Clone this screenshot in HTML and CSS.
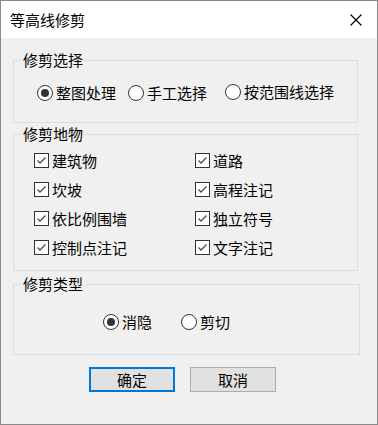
FILE: index.html
```html
<!DOCTYPE html>
<html lang="zh-CN">
<head>
<meta charset="utf-8">
<title>等高线修剪</title>
<link rel="stylesheet" href="styles.css">
</head>
<body>
<div class="window">
  <div class="titlebar">
    <span class="title">等高线修剪</span>
    <svg class="close" width="12" height="12" viewBox="0 0 12 12"><path d="M0.5 0.5 L11.5 11.5 M11.5 0.5 L0.5 11.5" stroke="#000" stroke-width="1.1" fill="none"/></svg>
  </div>
  <div class="content">
    <fieldset class="group g1">
      <legend>修剪选择</legend>
      <div class="inner radios-1">
        <label class="opt"><span class="radio on"></span>整图处理</label>
        <label class="opt"><span class="radio"></span>手工选择</label>
        <label class="opt up"><span class="radio"></span>按范围线选择</label>
      </div>
    </fieldset>
    <fieldset class="group g2">
      <legend>修剪地物</legend>
      <div class="inner checks">
        <label class="opt"><span class="check"><svg width="13" height="13" viewBox="0 0 13 13"><path d="M2.5 6.5 L5 9 L10.5 3.5" stroke="#4a4a4a" stroke-width="1.3" fill="none"/></svg></span>建筑物</label>
        <label class="opt"><span class="check"><svg width="13" height="13" viewBox="0 0 13 13"><path d="M2.5 6.5 L5 9 L10.5 3.5" stroke="#4a4a4a" stroke-width="1.3" fill="none"/></svg></span>道路</label>
        <label class="opt"><span class="check"><svg width="13" height="13" viewBox="0 0 13 13"><path d="M2.5 6.5 L5 9 L10.5 3.5" stroke="#4a4a4a" stroke-width="1.3" fill="none"/></svg></span>坎坡</label>
        <label class="opt"><span class="check"><svg width="13" height="13" viewBox="0 0 13 13"><path d="M2.5 6.5 L5 9 L10.5 3.5" stroke="#4a4a4a" stroke-width="1.3" fill="none"/></svg></span>高程注记</label>
        <label class="opt"><span class="check"><svg width="13" height="13" viewBox="0 0 13 13"><path d="M2.5 6.5 L5 9 L10.5 3.5" stroke="#4a4a4a" stroke-width="1.3" fill="none"/></svg></span>依比例围墙</label>
        <label class="opt"><span class="check"><svg width="13" height="13" viewBox="0 0 13 13"><path d="M2.5 6.5 L5 9 L10.5 3.5" stroke="#4a4a4a" stroke-width="1.3" fill="none"/></svg></span>独立符号</label>
        <label class="opt"><span class="check"><svg width="13" height="13" viewBox="0 0 13 13"><path d="M2.5 6.5 L5 9 L10.5 3.5" stroke="#4a4a4a" stroke-width="1.3" fill="none"/></svg></span>控制点注记</label>
        <label class="opt"><span class="check"><svg width="13" height="13" viewBox="0 0 13 13"><path d="M2.5 6.5 L5 9 L10.5 3.5" stroke="#4a4a4a" stroke-width="1.3" fill="none"/></svg></span>文字注记</label>
      </div>
    </fieldset>
    <fieldset class="group g3">
      <legend>修剪类型</legend>
      <div class="inner radios-3">
        <label class="opt"><span class="radio on"></span>消隐</label>
        <label class="opt"><span class="radio"></span>剪切</label>
      </div>
    </fieldset>
    <div class="buttons">
      <button class="btn default">确定</button>
      <button class="btn">取消</button>
    </div>
  </div>
</div>
</body>
</html>
```

FILE: styles.css
```css
* { box-sizing: border-box; }
html, body { margin: 0; padding: 0; background: #ffffff; }
body {
  font-family: "Noto Sans CJK SC", "Microsoft YaHei", sans-serif;
  font-size: 15px;
  color: #000;
}
.window {
  width: 378px;
  height: 425px;
  border: 1px solid #8a8a8a;
  background: #f0f0f0;
  display: flex;
  flex-direction: column;
}
.titlebar {
  height: 37px;
  flex: none;
  background: #ffffff;
  display: flex;
  align-items: center;
  justify-content: space-between;
  padding: 0 15px 0 9px;
  line-height: 20px;
}
.close { display: block; }
.content {
  padding-left: 12px;
}
.group {
  margin: 0;
  padding: 0;
  border: 1px solid #dcdcdc;
  width: 345px;
  min-width: 0;
}
.group legend {
  margin-left: 7px;
  padding: 0 2px;
  line-height: 20px;
}
.opt {
  display: flex;
  align-items: center;
  gap: 3px;
  line-height: 20px;
  white-space: nowrap;
}
.radio {
  width: 16px;
  height: 16px;
  flex: none;
  border: 1px solid #333;
  border-radius: 50%;
  background: #fff;
  display: flex;
  align-items: center;
  justify-content: center;
}
.radio.on::after {
  content: "";
  width: 8px;
  height: 8px;
  border-radius: 50%;
  background: #333;
}
.check {
  width: 15px;
  height: 15px;
  flex: none;
  border: 1px solid #333;
  background: #fff;
  display: flex;
}
.check svg { display: block; }

.g1 { margin-top: 12px; }
.radios-1 {
  display: grid;
  grid-template-columns: 91px 97px auto;
  padding: 13px 0 19px 23px;
}
.radios-1 .up { margin-top: -2px; }

.g2 { margin-top: 1px; }
.checks {
  display: grid;
  grid-template-columns: 161px auto;
  grid-auto-rows: 29px;
  align-items: center;
  padding: 2px 0 8px 20px;
}

.g3 { margin-top: 3px; width: 347px; }
.radios-3 {
  display: grid;
  grid-template-columns: 78px auto;
  padding: 18px 0 22px 89px;
}

.buttons {
  display: flex;
  gap: 15px;
  margin-top: 12px;
  padding-left: 76px;
}
.btn {
  width: 86px;
  height: 25px;
  background: #e1e1e1;
  border: 1px solid #adadad;
  font-family: inherit;
  font-size: 15px;
  color: #000;
  padding: 0;
  display: flex;
  align-items: center;
  justify-content: center;
  line-height: 20px;
}
.btn.default { border: 2px solid #0078d7; }
```
